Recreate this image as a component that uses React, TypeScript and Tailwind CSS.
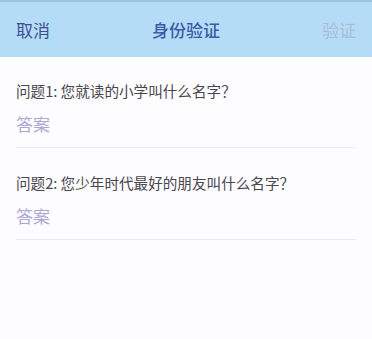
export default function App() {
  const questions = [
    "问题1: 您就读的小学叫什么名字？",
    "问题2: 您少年时代最好的朋友叫什么名字？",
  ];
  return (
    <div
      className="h-[339px] w-[372px] bg-[#fdfcfe]"
      style={{ fontFamily: '"Noto Sans CJK SC", "Liberation Sans", sans-serif' }}
    >
      <header className="flex h-[57px] items-center justify-between border-t-2 border-[#9fc4de] bg-[#b5dcf7] px-4">
        <button type="button" className="text-[17px] text-[#3d4f8f]">
          取消
        </button>
        <h1 className="text-[17px] font-medium text-[#3a5ba6]">身份验证</h1>
        <button type="button" className="text-[17px] text-[#a9bdd6]">
          验证
        </button>
      </header>
      <div className="flex flex-col gap-[22px] px-4 pt-[21px]">
        {questions.map((q) => (
          <div key={q} className="border-b border-[#ebeaf2] pb-[11px]">
            <p className="text-[14.6px] leading-[26px] text-[#4a4550]">{q}</p>
            <p className="mt-[8px] text-[17px] leading-[24px] text-[#aca7d3]">
              答案
            </p>
          </div>
        ))}
      </div>
    </div>
  );
}
